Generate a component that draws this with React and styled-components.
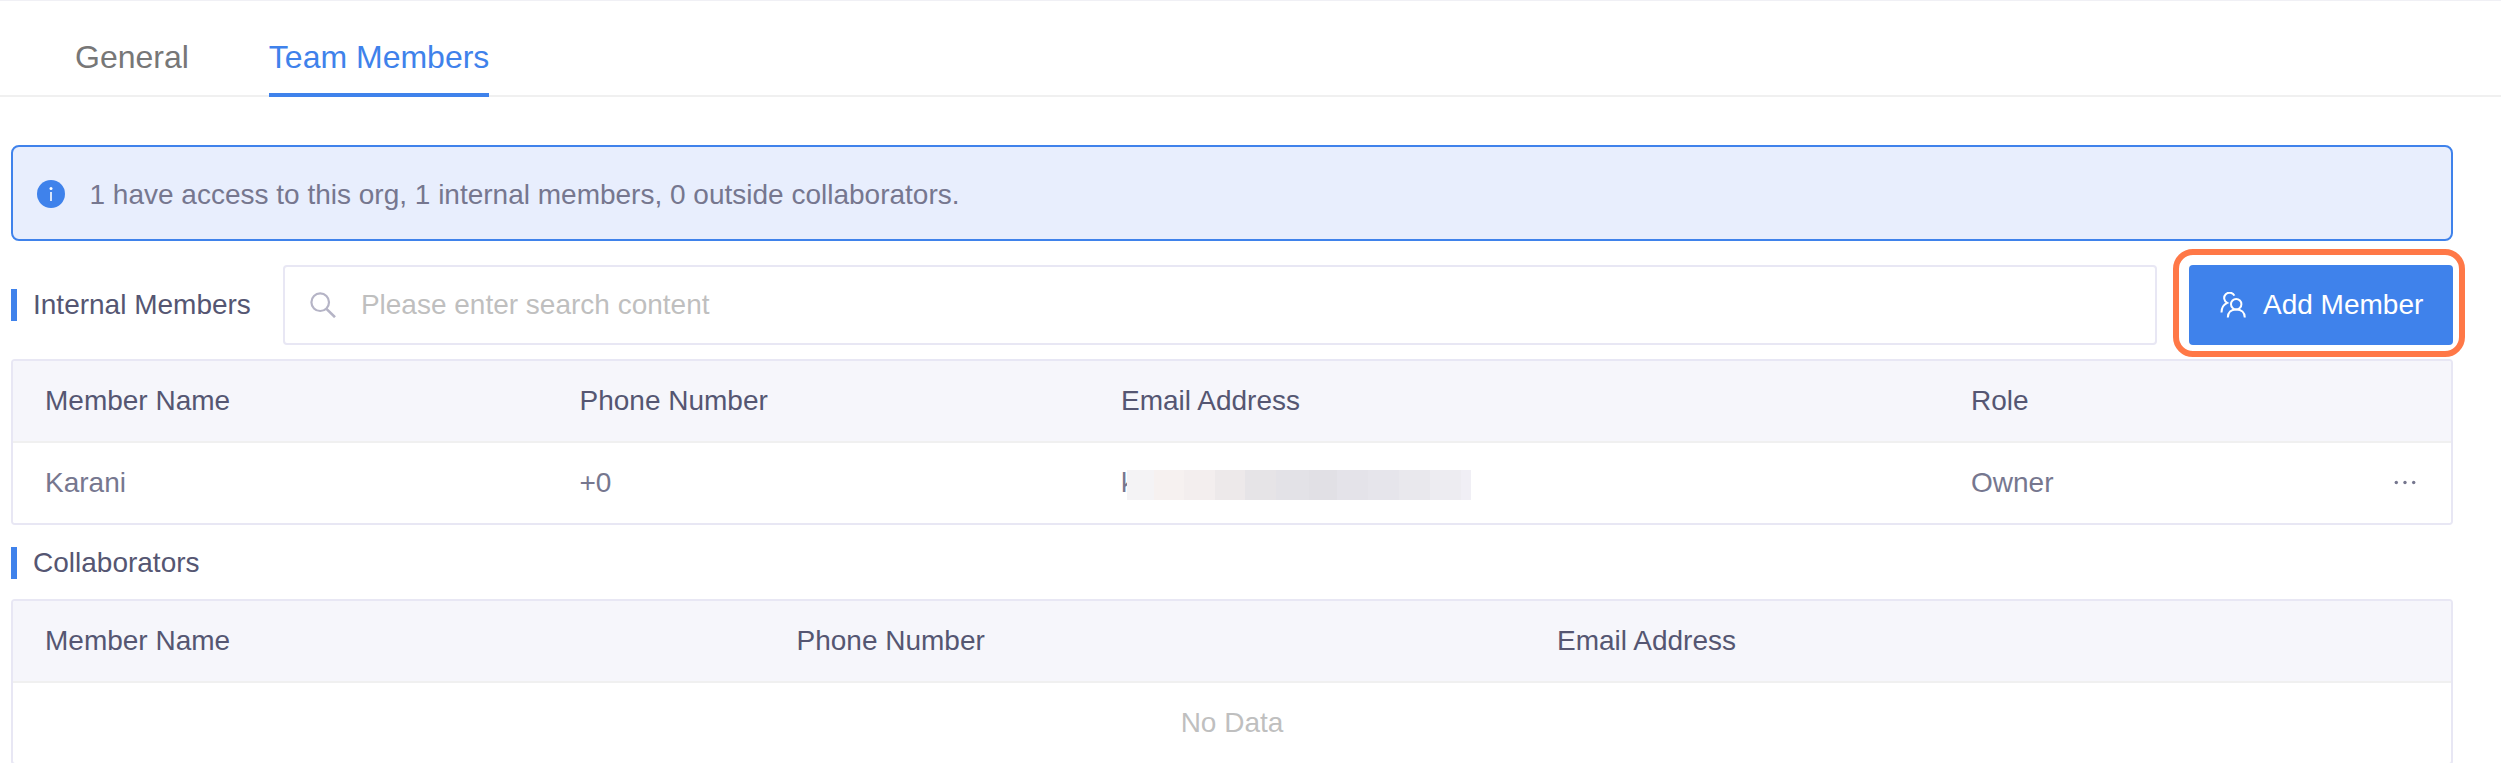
import React from 'react';
import styled, { createGlobalStyle } from 'styled-components';

const GlobalStyle = createGlobalStyle`
  * { box-sizing: border-box; }
  body {
    margin: 0;
    background: #fff;
    font-family: "Liberation Sans", Arial, sans-serif;
    font-size: 28px;
    line-height: 32px;
    color: #76778f;
  }
`;

const Page = styled.main`
  height: 763px;
  overflow: hidden;
  border-top: 1px solid #f0f0f5;
`;

const Tabs = styled.nav`
  display: flex;
  gap: 80px;
  height: 96px;
  padding-left: 75px;
  border-bottom: 2px solid #f0f0f0;
`;

const Tab = styled.button`
  height: 96px;
  padding: 32px 0 ${(p) => (p.$active ? '12px' : '16px')};
  border: 0;
  border-bottom: ${(p) => (p.$active ? '4px solid #3f82eb' : '0')};
  background: none;
  font: 32px/48px "Liberation Sans", Arial, sans-serif;
  white-space: nowrap;
  color: ${(p) => (p.$active ? '#3f82eb' : '#777')};
`;

const Content = styled.section`
  width: 2453px;
  padding: 48px 0 0 11px;
`;

const Notice = styled.div`
  display: flex;
  align-items: center;
  gap: 24.5px;
  height: 96px;
  padding: 2px 0 0 24px;
  border: 2px solid #3f82eb;
  border-radius: 8px;
  background: #e8eefd;
`;

const NoticeText = styled.span`
  padding-top: 2px;
`;

const Toolbar = styled.div`
  display: flex;
  align-items: center;
  margin: 24px 0 14px;
`;

const SectionTitle = styled.h2`
  margin: ${(p) => p.$margin || '0'};
  height: 32px;
  padding-left: 16px;
  border-left: 6px solid #3f82eb;
  font-size: 28px;
  font-weight: 400;
  line-height: 32px;
  white-space: nowrap;
  color: #555672;
`;

const SearchBox = styled.label`
  flex: 1;
  display: flex;
  align-items: center;
  gap: 25px;
  height: 80px;
  margin: 0 32px;
  padding-left: 25px;
  border: 2px solid #e8e7f4;
  border-radius: 4px;
`;

const SearchInput = styled.input`
  flex: 1;
  padding: 0;
  border: 0;
  outline: 0;
  background: none;
  font: 28px/32px "Liberation Sans", Arial, sans-serif;
  &::placeholder { color: #bfbfbf; opacity: 1; }
`;

const AddButton = styled.button`
  position: relative;
  display: flex;
  align-items: center;
  gap: 17px;
  width: 264px;
  height: 80px;
  padding: 0 0 0 31px;
  border: 0;
  border-radius: 4px;
  background: #3f82eb;
  color: #fff;
  font: 28px/32px "Liberation Sans", Arial, sans-serif;
  white-space: nowrap;
`;

const Highlight = styled.span`
  position: absolute;
  inset: -16px -12px -12px -16px;
  border: 6px solid #ff7847;
  border-radius: 20px;
  pointer-events: none;
`;

const Table = styled.div`
  border: 2px solid #e8e7f4;
  border-radius: 4px;
  overflow: hidden;
`;

const Row = styled.div`
  display: grid;
  grid-template-columns: ${(p) => p.$columns};
  align-items: center;
  height: ${(p) => (p.$head ? '82px' : '80px')};
  border-bottom: ${(p) => (p.$head ? '2px solid #f0f0f0' : '0')};
  background: ${(p) => (p.$head ? '#f6f6fb' : '#fff')};
  color: ${(p) => (p.$head ? '#555672' : '#76778f')};
`;

const Cell = styled.div`
  display: flex;
  align-items: center;
  height: 32px;
  padding-left: 32px;
  white-space: nowrap;
`;

const EmptyRow = styled.div`
  display: flex;
  align-items: center;
  justify-content: center;
  height: 80px;
  color: #bfbfbf;
`;

const Redacted = styled.span`
  position: relative;
  display: block;
  height: 32px;
`;

const Mask = styled.span`
  position: absolute;
  left: 6px;
  top: 3px;
  display: flex;
  height: 30px;
`;

const MaskBlock = styled.span`
  width: ${(p) => p.$width}px;
  background: ${(p) => p.$color};
`;

const MEMBER_COLUMNS = '534.5px 541.5px 850px 1fr 58px';
const COLLABORATOR_COLUMNS = '751.5px 760.5px 1fr';

const maskBlocks = [
  [27, '#f4f3f5'], [30, '#f6f1f0'], [31, '#f3eeee'], [30, '#ede9ea'],
  [31, '#e6e4e7'], [33, '#e3e2e7'], [28, '#e1e0e5'], [31, '#e4e3e9'],
  [31, '#e6e5eb'], [31, '#e9e8ed'], [31, '#edecf1'], [10, '#f0eff5'],
];

const InfoIcon = () => (
  <svg width="28" height="28" viewBox="0 0 28 28">
    <circle cx="14" cy="14" r="14" fill="#3f82eb" />
    <circle cx="14" cy="8.6" r="1.5" fill="#fff" />
    <path d="M13.2 12h1.6v9h-1.6z" fill="#fff" />
  </svg>
);

const SearchIcon = () => (
  <svg width="26" height="26" viewBox="0 0 26 26" fill="none" stroke="#b5b4c6" strokeWidth="2.2">
    <circle cx="10.2" cy="10.2" r="8.8" />
    <path d="M16.2 16.6L25 25.2" strokeWidth="2.6" />
  </svg>
);

const MembersIcon = () => (
  <svg width="26" height="26" viewBox="0 0 26 26" fill="none" stroke="#fff" strokeWidth="2">
    <circle cx="16.2" cy="12.2" r="5.2" />
    <path d="M7.8 25.5C7.8 20.4 11.2 17.4 16.2 17.4S24.8 20.4 24.8 25.5" />
    <path d="M14.4 3.6A5.4 5.4 0 1 0 7.2 10.9C3.4 12.7 1.5 15.8 1.5 20.4" />
  </svg>
);

const MoreIcon = () => (
  <svg width="24" height="6" viewBox="0 0 24 6" fill="#76778f">
    <circle cx="3.3" cy="2.5" r="1.7" />
    <circle cx="12" cy="2.5" r="1.7" />
    <circle cx="20.7" cy="2.5" r="1.7" />
  </svg>
);

export default function App() {
  return (
    <>
      <GlobalStyle />
      <Page>
        <Tabs>
          <Tab>General</Tab>
          <Tab $active>Team Members</Tab>
        </Tabs>
        <Content>
          <Notice>
            <InfoIcon />
            <NoticeText>1 have access to this org, 1 internal members, 0 outside collaborators.</NoticeText>
          </Notice>
          <Toolbar>
            <SectionTitle>Internal Members</SectionTitle>
            <SearchBox>
              <SearchIcon />
              <SearchInput placeholder="Please enter search content" />
            </SearchBox>
            <AddButton>
              <MembersIcon />
              Add Member
              <Highlight />
            </AddButton>
          </Toolbar>
          <Table>
            <Row $head $columns={MEMBER_COLUMNS}>
              <Cell>Member Name</Cell>
              <Cell>Phone Number</Cell>
              <Cell>Email Address</Cell>
              <Cell>Role</Cell>
            </Row>
            <Row $columns={MEMBER_COLUMNS}>
              <Cell>Karani</Cell>
              <Cell>+0</Cell>
              <Cell>
                <Redacted>
                  k
                  <Mask>
                    {maskBlocks.map(([width, color]) => (
                      <MaskBlock key={color} $width={width} $color={color} />
                    ))}
                  </Mask>
                </Redacted>
              </Cell>
              <Cell>Owner</Cell>
              <MoreIcon />
            </Row>
          </Table>
          <SectionTitle $margin="22px 0 20px">Collaborators</SectionTitle>
          <Table>
            <Row $head $columns={COLLABORATOR_COLUMNS}>
              <Cell>Member Name</Cell>
              <Cell>Phone Number</Cell>
              <Cell>Email Address</Cell>
            </Row>
            <EmptyRow>No Data</EmptyRow>
          </Table>
        </Content>
      </Page>
    </>
  );
}
